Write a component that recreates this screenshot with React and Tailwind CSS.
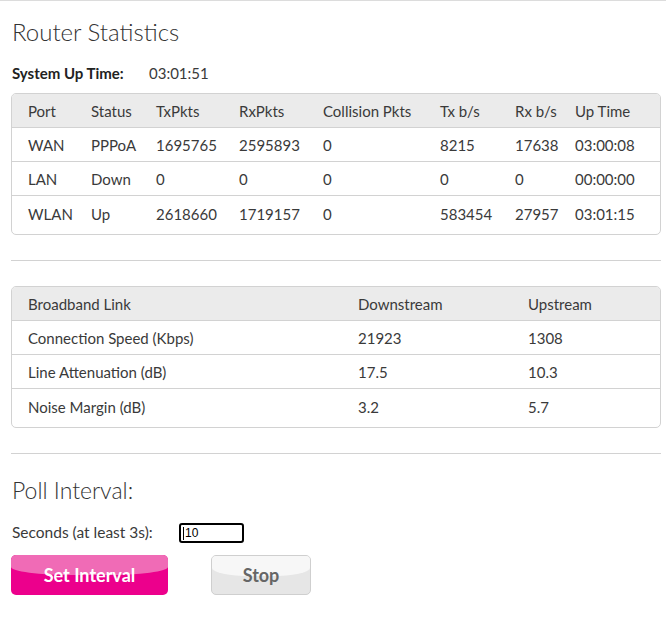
import React from 'react';

const PORTS = [
  ['WAN', 'PPPoA', '1695765', '2595893', '0', '8215', '17638', '03:00:08'],
  ['LAN', 'Down', '0', '0', '0', '0', '0', '00:00:00'],
  ['WLAN', 'Up', '2618660', '1719157', '0', '583454', '27957', '03:01:15'],
];

const PORT_HEAD = ['Port', 'Status', 'TxPkts', 'RxPkts', 'Collision Pkts', 'Tx b/s', 'Rx b/s', 'Up Time'];

const LINK = [
  ['Connection Speed (Kbps)', '21923', '1308'],
  ['Line Attenuation (dB)', '17.5', '10.3'],
  ['Noise Margin (dB)', '3.2', '5.7'],
];

const portCols = 'grid grid-cols-[63px_65px_83px_84px_117px_75px_60px_1fr] px-4 items-center';
const linkCols = 'grid grid-cols-[330px_170px_1fr] px-4 items-center';

function StatBox({ cols, head, rows }) {
  return (
    <div className="border border-[#d2d2d2] rounded-[5px] overflow-hidden pb-1">
      <div className={`${cols} h-[34px] pt-[2px] bg-[#ebebeb] border-b border-[#d2d2d2]`}>
        {head.map(h => <span key={h} className="whitespace-nowrap">{h}</span>)}
      </div>
      {rows.map((r, i) => (
        <div
          key={r[0]}
          className={`${cols} h-[34px] pt-[2px] ${i < rows.length - 1 ? 'border-b border-[#d2d2d2]' : ''}`}
        >
          {r.map((c, j) => <span key={j} className="whitespace-nowrap">{c}</span>)}
        </div>
      ))}
    </div>
  );
}

function GlossButton({ children, className, gloss }) {
  return (
    <button className={`relative overflow-hidden h-[40px] rounded-[5px] font-bold text-[18px] ${className}`}>
      <span className={`absolute left-0 right-0 top-0 h-[20px] rounded-b-[40%] ${gloss}`} />
      <span className="relative">{children}</span>
    </button>
  );
}

export default function App() {
  return (
    <div
      className="w-[666px] min-h-[639px] bg-white border-t border-[#dcdcdc] text-[#3a3a3a] text-[15px]"
      style={{ fontFamily: 'Lato, "Open Sans", sans-serif' }}
    >
      <div className="px-[11px] pr-[5px]">
        <h1 className="pt-[17px] pl-px text-[24px] leading-[28px] font-light text-[#333]">Router Statistics</h1>

        <div className="mt-[17px] flex items-center leading-5 text-[15px] pl-px">
          <span className="w-[137px] font-bold text-[#222]">System Up Time:</span>
          <span>03:01:51</span>
        </div>

        <div className="mt-[10px]">
          <StatBox cols={portCols} head={PORT_HEAD} rows={PORTS} />
        </div>

        <div className="mt-[25px] h-px bg-[#d2d2d2]" />

        <div className="mt-[25px]">
          <StatBox cols={linkCols} head={['Broadband Link', 'Downstream', 'Upstream']} rows={LINK} />
        </div>

        <div className="mt-[25px] h-px bg-[#d2d2d2]" />

        <h2 className="mt-[22px] pl-px text-[23px] leading-[28px] font-light text-[#333]">Poll Interval:</h2>

        <div className="mt-[19px] flex items-center h-[20px] text-[15.5px]">
          <span className="w-[168px] pl-px">Seconds (at least 3s):</span>
          <div
            className="w-[65px] h-[20px] border-2 border-black rounded-[3px] flex items-center pl-[2px] text-[12px] text-black"
            style={{ fontFamily: '"Liberation Sans", Arial, sans-serif' }}
          >
            <span className="w-px h-[13px] bg-black mr-px" />
            10
          </div>
        </div>

        <div className="mt-[12px] flex gap-[43px]">
          <GlossButton className="w-[157px] bg-[#ec008c] text-white" gloss="bg-[#f06bb6]">
            Set Interval
          </GlossButton>
          <GlossButton
            className="w-[100px] bg-[#e6e6e6] border border-[#cfcfcf] text-[#666]"
            gloss="bg-[#f7f7f7]"
          >
            Stop
          </GlossButton>
        </div>
      </div>
    </div>
  );
}
